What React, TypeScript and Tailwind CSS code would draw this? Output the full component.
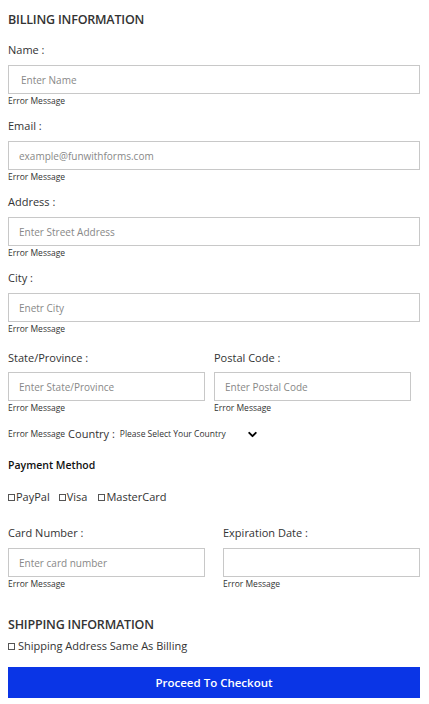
import { ChevronDown } from "lucide-react";

const font = { fontFamily: '"Open Sans", "Liberation Sans", sans-serif' };

const Label = ({ text }: { text: string }) => (
  <div className="h-[16px] pt-[1px] text-[11px] leading-[16px] text-[#333]">{text}</div>
);

const Input = ({
  placeholder,
  className = "",
}: {
  placeholder?: string;
  className?: string;
}) => (
  <input
    type="text"
    placeholder={placeholder}
    className={`h-[29px] border border-[#c8c8c8] bg-white px-[10px] text-[10px] text-[#333] outline-none placeholder:text-[#888] ${className}`}
  />
);

const ErrorMsg = () => (
  <div className="h-[14px] text-[8.5px] leading-[14px] text-[#333]">
    Error Message
  </div>
);

const Field = ({
  label,
  placeholder,
  inputClass = "",
}: {
  label: string;
  placeholder?: string;
  inputClass?: string;
}) => (
  <div className="flex flex-col">
    <Label text={label} />
    <Input placeholder={placeholder} className={`mt-[8px] w-full ${inputClass}`} />
    <ErrorMsg />
  </div>
);

const Box = () => (
  <span className="mr-[1px] inline-block h-[7px] w-[7px] border border-[#555] align-[0px]" />
);

export default function App() {
  return (
    <div style={font} className="min-h-[704px] bg-white pl-[8px] pr-[9px] pt-[11px] text-[#333]">
      <h2 className="h-[18px] text-[12.5px] font-semibold leading-[18px] tracking-[-0.2px] text-[#333]">
        BILLING INFORMATION
      </h2>

      <div className="mt-[12px] flex flex-col gap-[9px]">
        <Field label="Name :" placeholder="Enter Name" inputClass="px-[12px]" />
        <Field label="Email :" placeholder="example@funwithforms.com" />
        <Field label="Address :" placeholder="Enter Street Address" />
        <Field label="City :" placeholder="Enetr City" />
      </div>

      <div className="mt-[13px] flex gap-[9px]">
        <div className="flex w-[197px] flex-col">
          <Label text="State/Province :" />
          <Input placeholder="Enter State/Province" className="mt-[7px] w-full" />
          <ErrorMsg />
        </div>
        <div className="flex w-[197px] flex-col">
          <Label text="Postal Code :" />
          <Input placeholder="Enter Postal Code" className="mt-[7px] w-full" />
          <ErrorMsg />
        </div>
      </div>

      <div className="mt-[12px] flex h-[14px] items-center">
        <span className="text-[8.5px] text-[#333]">Error Message</span>
        <span className="ml-[3px] text-[11px] text-[#333]">Country :</span>
        <span className="ml-[5px] text-[8.5px] text-[#333]">Please Select Your Country</span>
        <ChevronDown size={13} strokeWidth={3.5} className="ml-[20px] text-black" />
      </div>

      <div className="mt-[16px] h-[16px] text-[10.5px] font-semibold leading-[16px] text-[#111]">
        Payment Method
      </div>

      <div className="mt-[16px] flex h-[16px] items-center text-[11px] text-[#333]">
        <span className="flex items-center">
          <Box />
          PayPal
        </span>
        <span className="ml-[9px] flex items-center">
          <Box />
          Visa
        </span>
        <span className="ml-[11px] flex items-center">
          <Box />
          MasterCard
        </span>
      </div>

      <div className="mt-[19px] flex justify-between">
        <div className="flex w-[197px] flex-col">
          <Label text="Card Number :" />
          <Input placeholder="Enter card number" className="mt-[8px] w-full" />
          <ErrorMsg />
        </div>
        <div className="flex w-[197px] flex-col">
          <Label text="Expiration Date :" />
          <Input className="mt-[8px] w-full" />
          <ErrorMsg />
        </div>
      </div>

      <h2 className="mt-[25px] h-[18px] text-[12.5px] font-semibold leading-[18px] tracking-[-0.2px] text-[#333]">
        SHIPPING INFORMATION
      </h2>

      <div className="mt-[4px] flex h-[16px] items-center text-[11px] text-[#333]">
        <Box />
        <span className="ml-[2px]">Shipping Address Same As Billing</span>
      </div>

      <button className="mt-[13px] h-[31px] w-full bg-[#0a35e6] text-[11.5px] font-semibold text-white">
        Proceed To Checkout
      </button>
    </div>
  );
}
